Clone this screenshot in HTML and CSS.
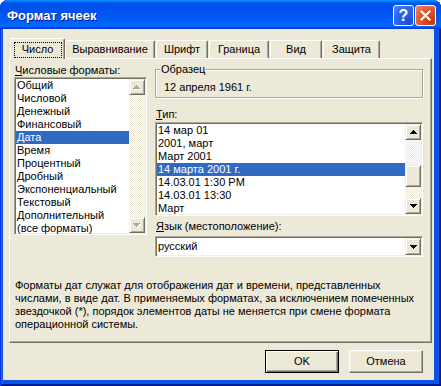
FILE: index.html
```html
<!DOCTYPE html>
<html lang="ru">
<head>
<meta charset="utf-8">
<title>Формат ячеек</title>
<link rel="stylesheet" href="styles.css">
</head>
<body>
<div class="window">
  <div class="titlebar">
    <span class="title">Формат ячеек</span>
    <div class="title-buttons">
      <div class="tb-btn tb-help">?</div>
      <div class="tb-btn tb-close">
        <svg width="13" height="13" viewBox="0 0 13 13"><path d="M2.5 2.5L10.5 10.5M10.5 2.5L2.5 10.5" stroke="#fff" stroke-width="2.2" stroke-linecap="square"/></svg>
      </div>
    </div>
  </div>
  <div class="client">
    <div class="tabs">
      <div class="tab tab-active tab-number"><span class="focus">Число</span></div>
      <div class="tab tab-align">Выравнивание</div>
      <div class="tab tab-font">Шрифт</div>
      <div class="tab tab-border">Граница</div>
      <div class="tab tab-view">Вид</div>
      <div class="tab tab-protect">Защита</div>
    </div>
    <div class="panel">
      <div class="columns">
        <div class="col-left">
          <div class="label"><u>Ч</u>исловые форматы:</div>
          <div class="listbox listbox-cat">
            <ul class="items">
              <li>Общий</li>
              <li>Числовой</li>
              <li>Денежный</li>
              <li>Финансовый</li>
              <li class="selected">Дата</li>
              <li>Время</li>
              <li>Процентный</li>
              <li>Дробный</li>
              <li>Экспоненциальный</li>
              <li>Текстовый</li>
              <li>Дополнительный</li>
              <li>(все форматы)</li>
            </ul>
            <div class="scrollbar">
              <div class="sb-btn">
                <svg width="8" height="5" viewBox="0 0 8 5" shape-rendering="crispEdges"><path fill="#fff" d="M4 1h1v1H4zM3 2h3v1H3zM2 3h5v1H2zM1 4h7v1H1z"/><path fill="#ACA899" d="M3 0h1v1H3zM2 1h3v1H2zM1 2h5v1H1zM0 3h7v1H0z"/></svg>
              </div>
              <div class="sb-track"></div>
              <div class="sb-btn">
                <svg width="8" height="5" viewBox="0 0 8 5" shape-rendering="crispEdges"><path fill="#fff" d="M1 1h7v1H1zM2 2h5v1H2zM3 3h3v1H3zM4 4h1v1H4z"/><path fill="#ACA899" d="M0 0h7v1H0zM1 1h5v1H1zM2 2h3v1H2zM3 3h1v1H3z"/></svg>
              </div>
            </div>
          </div>
        </div>
        <div class="col-right">
          <fieldset class="group">
            <legend>Образец</legend>
            <div class="sample">12 апреля 1961 г.</div>
          </fieldset>
          <div class="label label-type"><u>Т</u>ип:</div>
          <div class="listbox listbox-type">
            <ul class="items">
              <li>14 мар 01</li>
              <li>2001, март</li>
              <li>Март 2001</li>
              <li class="selected">14 марта 2001 г.</li>
              <li>14.03.01 1:30 PM</li>
              <li>14.03.01 13:30</li>
              <li>Март</li>
            </ul>
            <div class="scrollbar">
              <div class="sb-btn">
                <svg width="7" height="4" viewBox="0 0 7 4" shape-rendering="crispEdges"><path fill="#000" d="M3 0h1v1H3zM2 1h3v1H2zM1 2h5v1H1zM0 3h7v1H0z"/></svg>
              </div>
              <div class="sb-track sb-track-top"></div>
              <div class="sb-thumb"></div>
              <div class="sb-track"></div>
              <div class="sb-btn">
                <svg width="7" height="4" viewBox="0 0 7 4" shape-rendering="crispEdges"><path fill="#000" d="M0 0h7v1H0zM1 1h5v1H1zM2 2h3v1H2zM3 3h1v1H3z"/></svg>
              </div>
            </div>
          </div>
          <div class="label label-lang"><u>Я</u>зык (местоположение):</div>
          <div class="combo">
            <span class="combo-value">русский</span>
            <div class="sb-btn combo-btn">
              <svg width="7" height="4" viewBox="0 0 7 4" shape-rendering="crispEdges"><path fill="#000" d="M0 0h7v1H0zM1 1h5v1H1zM2 2h3v1H2zM3 3h1v1H3z"/></svg>
            </div>
          </div>
        </div>
      </div>
      <p class="description">Форматы дат служат для отображения дат и времени, представленных<br>числами, в виде дат. В применяемых форматах, за исключением помеченных<br>звездочкой (*), порядок элементов даты не меняется при смене формата<br>операционной системы.</p>
    </div>
    <div class="buttons">
      <div class="btn btn-default">OK</div>
      <div class="btn">Отмена</div>
    </div>
  </div>
</div>
</body>
</html>
```

FILE: styles.css
```css
* { box-sizing: border-box; }
html, body { margin: 0; padding: 0; }
body {
  width: 441px;
  height: 386px;
  overflow: hidden;
  background: #fff;
  font-family: "Liberation Sans", Arial, sans-serif;
  font-size: 11px;
  line-height: 13px;
  color: #000;
}

.window {
  width: 441px;
  height: 386px;
  display: flex;
  flex-direction: column;
  background: #0A55E6;
  border-radius: 8px 8px 0 0;
  overflow: hidden;
  box-shadow: inset 1px 0 #0831D9, inset -1px -1px #00138C, inset 2px 0 #166AEE, inset -2px -2px #001EA0;
}

.titlebar {
  height: 29px;
  flex: none;
  display: flex;
  align-items: center;
  justify-content: space-between;
  padding: 0 5px 0 7px;
  background: linear-gradient(180deg, #0997FF 0px, #0053EE 3px, #0050EE 11px, #0066FF 25px, #0066FF 26px, #005BFF 27px, #003DD7 28px, #003DD7 29px);
}
.title {
  font-family: "Liberation Sans", Arial, sans-serif;
  font-weight: bold;
  font-size: 13px;
  color: #fff;
  text-shadow: 1px 1px #0A1883;
  padding-top: 1px;
}
.title-buttons { display: flex; gap: 1px; padding-top: 2px; }
.tb-btn {
  width: 21px;
  height: 21px;
  border: 1px solid #fff;
  border-radius: 3px;
  display: flex;
  align-items: center;
  justify-content: center;
}
.tb-help {
  background: radial-gradient(circle at 85% 85%, #1A4FD8 0, #2A66EE 60%, #4C8CF7 100%);
  color: #fff;
  font-weight: bold;
  font-size: 16px;
  font-family: "Liberation Sans", Arial, sans-serif;
}
.tb-close {
  background: radial-gradient(circle at 85% 85%, #C2380F 0, #E0552C 55%, #EE8A68 100%);
}

.client {
  flex: 1;
  margin: 0 7px 6px 3px;
  background: #ECE9D8;
  padding: 9px 2px 0 6px;
  display: flex;
  flex-direction: column;
}

.tabs {
  display: flex;
  align-items: flex-end;
  height: 20px;
  padding-left: 1px;
}
.tab {
  height: 18px;
  border-top: 1px solid #fff;
  border-left: 1px solid #fff;
  border-right: 1px solid #716F64;
  box-shadow: inset -1px 0 #ACA899;
  border-radius: 2px 2px 0 0;
  display: flex;
  align-items: center;
  justify-content: center;
  margin-right: 1px;
  background: #ECE9D8;
  padding-bottom: 1px;
}
.tab-active {
  height: 21px;
  margin-bottom: -1px;
  margin-right: 0;
  position: relative;
  z-index: 1;
  padding-bottom: 0;
}
.focus {
  width: 48px;
  height: 16px;
  border: 1px dotted #000;
  display: flex;
  align-items: center;
  justify-content: center;
  margin-top: 1px;
}
.tab-number { width: 55px; }
.tab-align { width: 90px; }
.tab-font { width: 52px; }
.tab-border { width: 60px; }
.tab-view { width: 52px; }
.tab-protect { width: 57px; }

.panel {
  height: 285px;
  border-top: 1px solid #fff;
  border-left: 1px solid #fff;
  border-right: 1px solid #716F64;
  border-bottom: 1px solid #716F64;
  box-shadow: inset -1px -1px #ACA899;
  padding: 4px 0 0 4px;
}

.columns {
  display: grid;
  grid-template-columns: 133px 268px;
  column-gap: 8px;
  align-items: start;
}
.col-left { padding-top: 1px; }
.label { height: 13px; padding-left: 1px; white-space: nowrap; }

.listbox {
  display: flex;
  background: #fff;
  border: 1px solid;
  border-color: #ACA899 #fff #fff #ACA899;
  box-shadow: inset 1px 1px #716F64, inset -1px -1px #F1EFE2;
  padding: 1px;
  overflow: hidden;
}
.listbox-cat { height: 158px; }
.listbox-type { height: 94px; margin-top: 1px; }
.items {
  list-style: none;
  margin: 0;
  padding: 0;
  flex: 1;
  min-width: 0;
}
.items li {
  height: 13px;
  line-height: 13px;
  padding-left: 1px;
  white-space: nowrap;
}
.items li.selected { background: #316AC5; color: #fff; }

.scrollbar {
  width: 16px;
  flex: none;
  display: flex;
  flex-direction: column;
}
.sb-btn {
  width: 16px;
  height: 16px;
  flex: none;
  background: #ECE9D8;
  border: 1px solid;
  border-color: #F1EFE2 #716F64 #716F64 #F1EFE2;
  box-shadow: inset 1px 1px #fff, inset -1px -1px #ACA899;
  display: flex;
  align-items: center;
  justify-content: center;
}
.sb-track {
  flex: 1;
  background: repeating-conic-gradient(#fff 0 25%, #ECE9D8 0 50%) 0 0 / 2px 2px;
}
.sb-track-top { flex: none; height: 25px; }
.sb-thumb {
  height: 22px;
  flex: none;
  background: #ECE9D8;
  border: 1px solid;
  border-color: #F1EFE2 #716F64 #716F64 #F1EFE2;
  box-shadow: inset 1px 1px #fff, inset -1px -1px #ACA899;
}

.group {
  margin: 0;
  min-width: 0;
  height: 35px;
  padding: 5px 0 3px 4px;
  border: 1px solid #ACA899;
  box-shadow: inset 1px 1px #fff, 1px 1px #fff;
}
.group legend {
  padding: 0 1px;
  line-height: 13px;
  background: #ECE9D8;
}
.sample { padding-left: 4px; height: 13px; }
.label-type { margin-top: 10px; }
.label-lang { margin-top: 4px; }

.combo {
  margin-top: 3px;
  height: 21px;
  display: flex;
  align-items: center;
  background: #fff;
  border: 1px solid;
  border-color: #ACA899 #fff #fff #ACA899;
  box-shadow: inset 1px 1px #716F64, inset -1px -1px #F1EFE2;
  padding: 1px;
}
.combo-value { flex: 1; padding-left: 1px; }
.combo-btn { height: 17px; }

.description {
  margin: 22px 0 0 1px;
  line-height: 13px;
  white-space: nowrap;
}

.buttons {
  display: flex;
  justify-content: flex-end;
  gap: 10px;
  margin-top: 7px;
  padding-right: 9px;
}
.btn {
  width: 74px;
  height: 23px;
  display: flex;
  align-items: center;
  justify-content: center;
  background: #ECE9D8;
  border: 1px solid;
  border-color: #fff #716F64 #716F64 #fff;
  box-shadow: inset -1px -1px #ACA899, inset 1px 1px #F1EFE2;
}
.btn-default {
  border: 1px solid #000;
  box-shadow: inset 1px 1px #fff, inset -1px -1px #716F64, inset -2px -2px #ACA899;
}
```
